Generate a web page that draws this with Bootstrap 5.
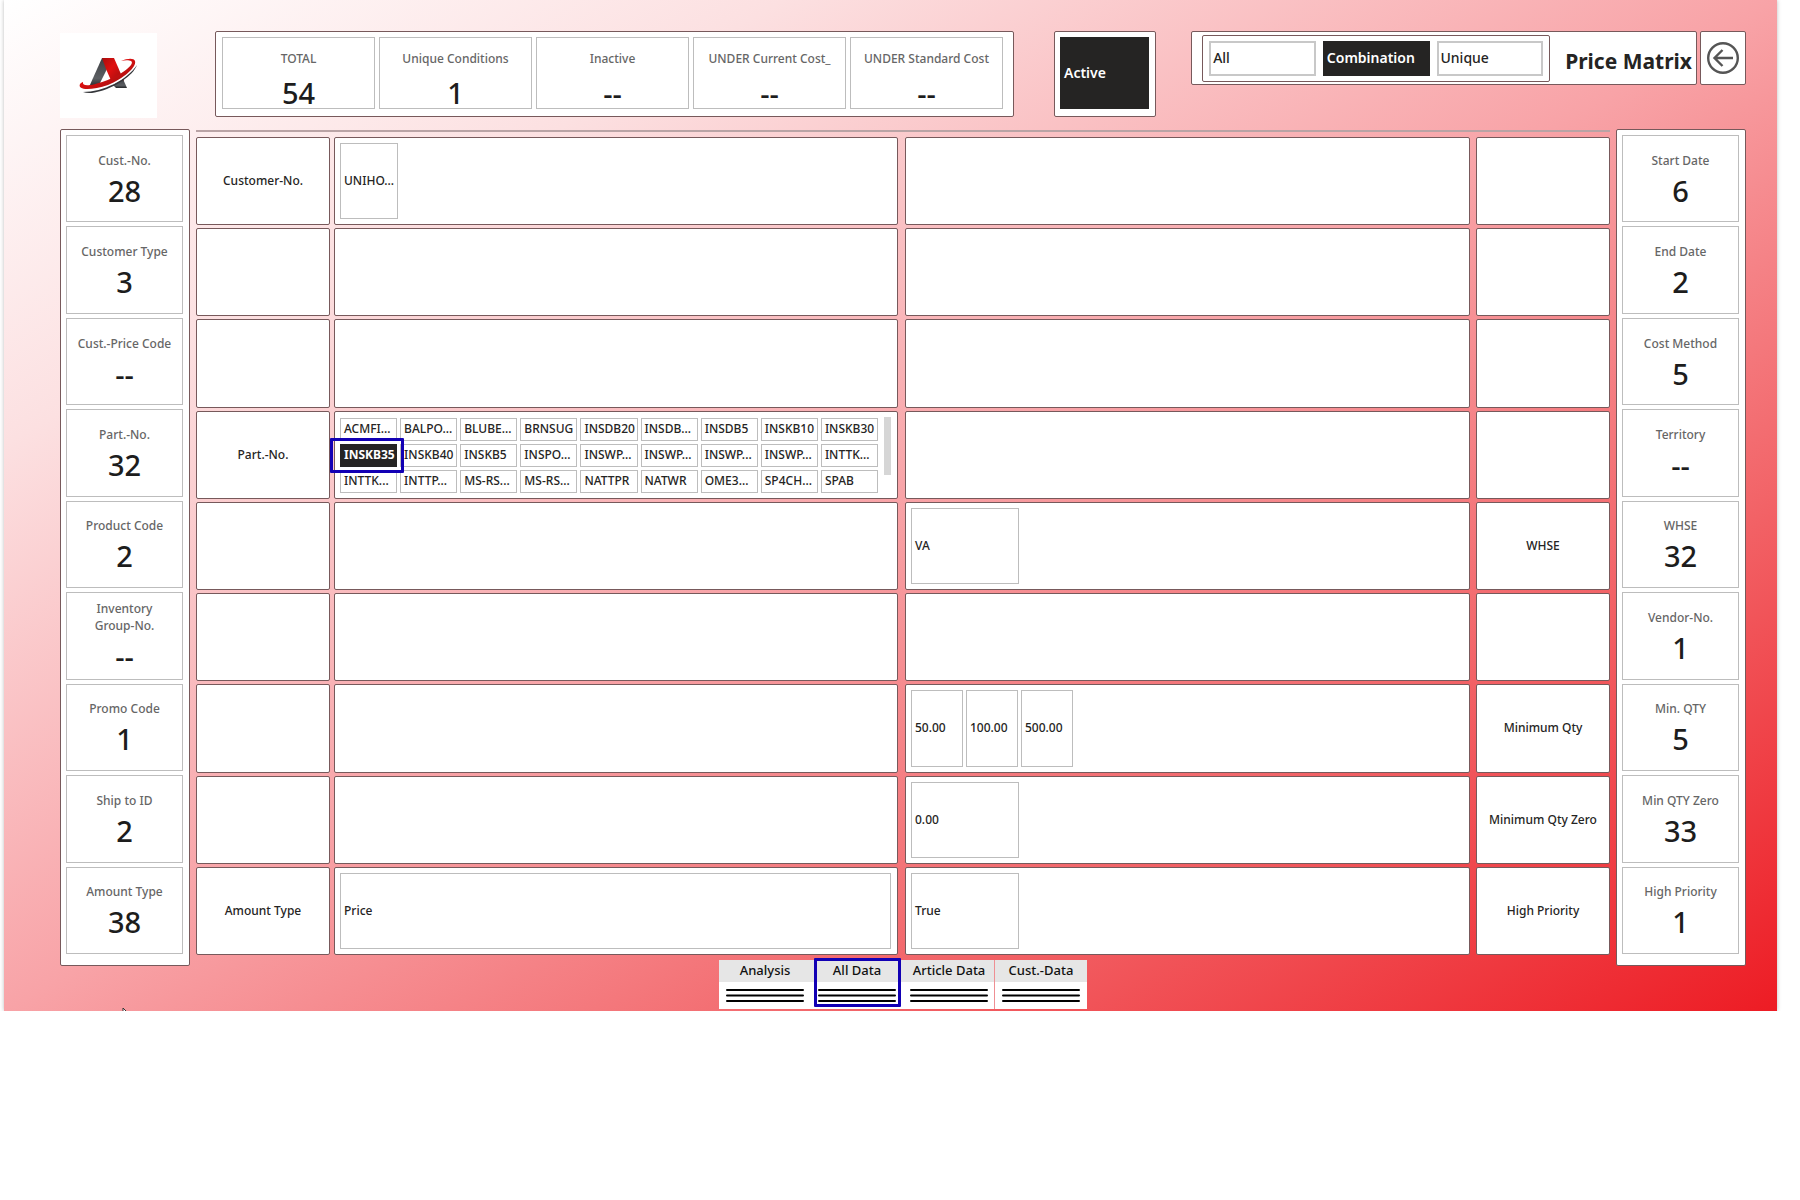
<!DOCTYPE html>
<html lang="en">
<head>
<meta charset="utf-8">
<meta name="viewport" content="width=device-width, initial-scale=1">
<title>Price Matrix</title>
<link href="https://cdn.jsdelivr.net/npm/bootstrap@5.3.0/dist/css/bootstrap.min.css" rel="stylesheet">
<style>
  body { font-family: "Noto Sans", "Open Sans", sans-serif; font-size: 12px; line-height: 16px; font-weight: 500; color: #252423; background: #fff; }
  button { font: inherit; color: inherit; }
  .report { position: relative; overflow: hidden; margin: 0 23px 0 4px; padding: 31px 31px 0 56px; min-height: 1011px; background: linear-gradient(to bottom right, #fff 0%, #fce0e1 22%, #f8a3a7 50%, #f26266 75%, #ed1c24 100%); box-shadow: 0 0 4px #bbb; }
  .frame { background: #fff; border: 1px solid #77595b; border-radius: 2px; }
  .logo-tile { width: 97px; height: 85px; margin-top: 2px; background: #fff; }
  .top-bar { height: 98px; }
  .kpi-strip { width: 799px; height: 86px; margin-left: 58px; padding: 5px 10px 7px 6px; gap: 4px; }
  .kpi { border: 1px solid #bdbdbd; color: #666; text-align: center; }
  .kpi-strip .kpi { flex: 1 1 0; padding-top: 13px; }
  .kpi-value { font-size: 29px; line-height: 36px; font-weight: 500; color: #1d1d1d; }
  .kpi-strip .kpi-value { margin-top: 8px; }
  .status-box { width: 102px; height: 86px; margin-left: 40px; padding: 5px 6px 7px 5px; }
  .opt { border: 2px solid #c8c8c8; background: #fff; text-align: left; padding: 0 2px; font-size: 14px; font-weight: 500; }
  .opt.on { background: #252423; border-color: #252423; color: #fff; font-weight: 600; }
  .mode-bar { height: 54px; padding-left: 10px; padding-right: 4px; }
  .mode-set { width: 348px; height: 47px; padding: 5px 6px; gap: 7px; }
  .mode-set .opt { flex: 1 1 0; }
  .mode-title { font-size: 21px; line-height: 30px; font-weight: 700; margin: 6px 0 0 15px; white-space: nowrap; }
  .back-btn { width: 46px; height: 54px; margin-left: 3px; padding: 0; }
  .board { gap: 6px; }
  .side { flex: 0 0 130px; height: 837px; display: grid; grid-auto-rows: 1fr; gap: 4px; padding: 5px 6px 11px 5px; }
  .side .kpi { display: flex; flex-direction: column; align-items: center; justify-content: center; gap: 4px; padding-top: 3px; line-height: 17px; }
  .matrix { border-top: 2px solid #b9a3a5; margin-top: 1px; height: 825px; padding-top: 5px; gap: 7px; }
  .half { display: grid; grid-auto-rows: 1fr; row-gap: 3px; flex: 1 1 0; min-width: 0; }
  .half-l { grid-template-columns: 134px minmax(0, 1fr); column-gap: 4px; }
  .half-r { grid-template-columns: minmax(0, 1fr) 134px; column-gap: 6px; flex-basis: 3px; }
  .tag { display: flex; align-items: center; justify-content: center; }
  .slot { display: flex; gap: 3px; padding: 5px 6px 5px 5px; min-height: 0; }
  .chip { border: 1px solid #bdbdbd; background: #fff; padding: 0 3px; text-align: left; white-space: nowrap; overflow: hidden; min-width: 0; width: 108px; }
  .chip-s { width: 52px; }
  .chip-m { width: 58px; }
  .chip.on { background: #252423; border-color: #252423; color: #fff; font-weight: 700; }
  .parts { display: grid; grid-template-columns: repeat(9, minmax(0, 1fr)); grid-auto-rows: 23px; gap: 3px; flex: 1 1 0; margin-top: 1px; }
  .parts .chip { width: auto; }
  .scroll-bar { width: 7px; height: 58px; margin-left: 3px; background: #d6d6d6; }
  .callout { position: absolute; border: 3px solid #1200b4; border-radius: 1px; pointer-events: none; }
  .callout-part { inset: -6px -7px -6px -10px; z-index: 2; }
  .callout-nav { inset: -2px 2px 2px 3px; }
  .nav-row { margin-top: -6px; margin-left: 0; padding-left: 0; }
  .nav-tile { width: 92px; height: 49px; background: #fff; color: #111; text-decoration: none; text-align: center; font-size: 13px; position: relative; }
  .nav-tile span { display: block; height: 22px; line-height: 21px; background: #e6e6e6; }
  .nav-tile svg { display: block; margin: 6px auto 0; }
  .nav-tile:last-child { box-shadow: -1px 0 #ef8f93; }
  .pointer { position: absolute; left: 118px; bottom: -9px; }
</style>
</head>
<body>
<main class="report">
  <header class="top-bar d-flex align-items-start">
    <div class="logo-tile d-flex">
      <svg width="97" height="85" viewBox="0 0 97 85" role="img" aria-label="Company logo">
        <defs>
          <linearGradient id="gr" x1="0" y1="0" x2="1" y2="1"><stop offset="0" stop-color="#a80d0d"/><stop offset=".4" stop-color="#e01010"/><stop offset="1" stop-color="#8c1010"/></linearGradient>
          <linearGradient id="gk" x1="0" y1="0" x2="0" y2="1"><stop offset="0" stop-color="#3c3e42"/><stop offset=".7" stop-color="#5c5f63"/><stop offset="1" stop-color="#242628"/></linearGradient>
        </defs>
        <path d="M42 25h8l-2 9-9 18-10 2Z" fill="url(#gk)"/>
        <path d="M42 25h12l10 23-11 4-7-16Z" fill="url(#gr)"/>
        <path d="M53 52l10-6 4 9H56Z" fill="url(#gk)"/>
        <path d="M24 57c14 0 42-12 50-29l2 5C69 46 44 59 26 59Z" fill="#fff"/>
        <path d="M23 49c-1 5 8 4 22-1 15-5 31-17 26-20-2-1-6-1-10 0 7-3 13-3 14 0 2 6-12 18-27 24-15 5-31 6-28-1 1-1 2-2 3-2Z" fill="url(#gr)"/>
        <path d="M77 32c-4 11-22 22-36 26-7 2-13 3-18 1 20 0 44-12 54-27Z" fill="#34363a"/>
      </svg>
    </div>
    <section class="kpi-strip frame d-flex" aria-label="Totals">
      <div class="kpi">TOTAL<div class="kpi-value">54</div></div>
      <div class="kpi">Unique Conditions<div class="kpi-value">1</div></div>
      <div class="kpi">Inactive<div class="kpi-value">--</div></div>
      <div class="kpi">UNDER Current Cost_<div class="kpi-value">--</div></div>
      <div class="kpi">UNDER Standard Cost<div class="kpi-value">--</div></div>
    </section>
    <div class="status-box frame d-flex"><button type="button" class="opt on w-100" aria-pressed="true">Active</button></div>
    <div class="mode-bar frame d-flex align-items-center ms-auto">
      <div class="mode-set frame d-flex" role="group" aria-label="Conditions">
        <button type="button" class="opt">All</button>
        <button type="button" class="opt on" aria-pressed="true">Combination</button>
        <button type="button" class="opt">Unique</button>
      </div>
      <h1 class="mode-title">Price Matrix</h1>
    </div>
    <button type="button" class="back-btn frame d-flex align-items-center justify-content-center" aria-label="Back">
      <svg width="34" height="34" viewBox="0 0 34 34" fill="none" stroke="#555" stroke-width="2.4"><circle cx="17" cy="17" r="14.8"/><path d="M27 17H9M16.500 9 8.500 17l8 8"/></svg>
    </button>
  </header>

  <div class="board d-flex align-items-start">
    <aside class="side frame">
      <div class="kpi">Cust.-No.<div class="kpi-value">28</div></div>
      <div class="kpi">Customer Type<div class="kpi-value">3</div></div>
      <div class="kpi">Cust.-Price Code<div class="kpi-value">--</div></div>
      <div class="kpi">Part.-No.<div class="kpi-value">32</div></div>
      <div class="kpi">Product Code<div class="kpi-value">2</div></div>
      <div class="kpi">Inventory<br>Group-No.<div class="kpi-value">--</div></div>
      <div class="kpi">Promo Code<div class="kpi-value">1</div></div>
      <div class="kpi">Ship to ID<div class="kpi-value">2</div></div>
      <div class="kpi">Amount Type<div class="kpi-value">38</div></div>
    </aside>

    <section class="matrix d-flex flex-fill" aria-label="Matrix">
      <div class="half half-l">
        <div class="tag frame">Customer-No.</div>
        <div class="slot frame"><button type="button" class="chip chip-m">UNIHO...</button></div>
        <div class="tag frame"></div><div class="slot frame"></div>
        <div class="tag frame"></div><div class="slot frame"></div>
        <div class="tag frame">Part.-No.</div>
        <div class="slot frame">
          <div class="parts">
            <button type="button" class="chip">ACMFI...</button>
            <button type="button" class="chip">BALPO...</button>
            <button type="button" class="chip">BLUBE...</button>
            <button type="button" class="chip">BRNSUG</button>
            <button type="button" class="chip">INSDB20</button>
            <button type="button" class="chip">INSDB...</button>
            <button type="button" class="chip">INSDB5</button>
            <button type="button" class="chip">INSKB10</button>
            <button type="button" class="chip">INSKB30</button>
            <div class="position-relative d-flex"><button type="button" class="chip on w-100" aria-pressed="true">INSKB35</button><i class="callout callout-part"></i></div>
            <button type="button" class="chip">INSKB40</button>
            <button type="button" class="chip">INSKB5</button>
            <button type="button" class="chip">INSPO...</button>
            <button type="button" class="chip">INSWP...</button>
            <button type="button" class="chip">INSWP...</button>
            <button type="button" class="chip">INSWP...</button>
            <button type="button" class="chip">INSWP...</button>
            <button type="button" class="chip">INTTK...</button>
            <button type="button" class="chip">INTTK...</button>
            <button type="button" class="chip">INTTP...</button>
            <button type="button" class="chip">MS-RS...</button>
            <button type="button" class="chip">MS-RS...</button>
            <button type="button" class="chip">NATTPR</button>
            <button type="button" class="chip">NATWR</button>
            <button type="button" class="chip">OME3...</button>
            <button type="button" class="chip">SP4CH...</button>
            <button type="button" class="chip">SPAB</button>
          </div>
          <div class="scroll-bar"></div>
        </div>
        <div class="tag frame"></div><div class="slot frame"></div>
        <div class="tag frame"></div><div class="slot frame"></div>
        <div class="tag frame"></div><div class="slot frame"></div>
        <div class="tag frame"></div><div class="slot frame"></div>
        <div class="tag frame">Amount Type</div>
        <div class="slot frame"><button type="button" class="chip w-100">Price</button></div>
      </div>
      <div class="half half-r">
        <div class="slot frame"></div><div class="tag frame"></div>
        <div class="slot frame"></div><div class="tag frame"></div>
        <div class="slot frame"></div><div class="tag frame"></div>
        <div class="slot frame"></div><div class="tag frame"></div>
        <div class="slot frame"><button type="button" class="chip">VA</button></div><div class="tag frame">WHSE</div>
        <div class="slot frame"></div><div class="tag frame"></div>
        <div class="slot frame">
          <button type="button" class="chip chip-s">50.00</button>
          <button type="button" class="chip chip-s">100.00</button>
          <button type="button" class="chip chip-s">500.00</button>
        </div><div class="tag frame">Minimum Qty</div>
        <div class="slot frame"><button type="button" class="chip">0.00</button></div><div class="tag frame">Minimum Qty Zero</div>
        <div class="slot frame"><button type="button" class="chip">True</button></div><div class="tag frame">High Priority</div>
      </div>
    </section>

    <aside class="side frame">
      <div class="kpi">Start Date<div class="kpi-value">6</div></div>
      <div class="kpi">End Date<div class="kpi-value">2</div></div>
      <div class="kpi">Cost Method<div class="kpi-value">5</div></div>
      <div class="kpi">Territory<div class="kpi-value">--</div></div>
      <div class="kpi">WHSE<div class="kpi-value">32</div></div>
      <div class="kpi">Vendor-No.<div class="kpi-value">1</div></div>
      <div class="kpi">Min. QTY<div class="kpi-value">5</div></div>
      <div class="kpi">Min QTY Zero<div class="kpi-value">33</div></div>
      <div class="kpi">High Priority<div class="kpi-value">1</div></div>
    </aside>
  </div>

  <nav class="nav-row d-flex justify-content-center" aria-label="Pages">
    <a href="#" class="nav-tile"><span>Analysis</span><svg width="80" height="15" stroke="#000" stroke-width="2" stroke-linecap="round"><path d="M2 2h76M2 7.500h76M2 13h76"/></svg></a>
    <a href="#" class="nav-tile"><span>All Data</span><svg width="80" height="15" stroke="#000" stroke-width="2" stroke-linecap="round"><path d="M2 2h76M2 7.500h76M2 13h76"/></svg><i class="callout callout-nav"></i></a>
    <a href="#" class="nav-tile"><span>Article Data</span><svg width="80" height="15" stroke="#000" stroke-width="2" stroke-linecap="round"><path d="M2 2h76M2 7.500h76M2 13h76"/></svg></a>
    <a href="#" class="nav-tile"><span>Cust.-Data</span><svg width="80" height="15" stroke="#000" stroke-width="2" stroke-linecap="round"><path d="M2 2h76M2 7.500h76M2 13h76"/></svg></a>
  </nav>
  <svg class="pointer" width="9" height="13" viewBox="0 0 9 13" aria-hidden="true"><path d="M1 1v10l3-3h4Z" fill="#fff" stroke="#333" stroke-width="1"/></svg>
</main>
<script src="https://cdn.jsdelivr.net/npm/bootstrap@5.3.0/dist/js/bootstrap.bundle.min.js"></script>
</body>
</html>
